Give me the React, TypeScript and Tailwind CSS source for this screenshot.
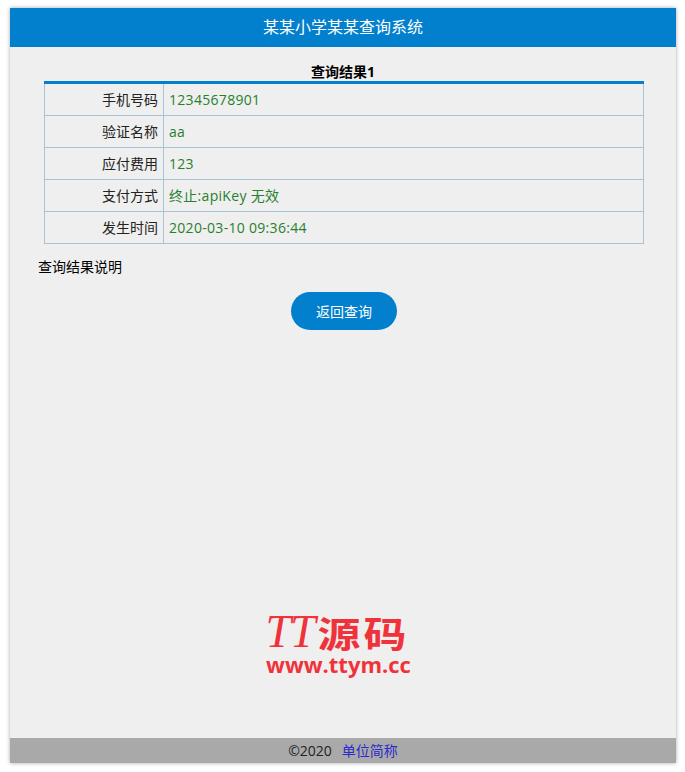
const rows: [string, string][] = [
  ["手机号码", "12345678901"],
  ["验证名称", "aa"],
  ["应付费用", "123"],
  ["支付方式", "终止:apiKey 无效"],
  ["发生时间", "2020-03-10 09:36:44"],
];

const font = "font-['Open_Sans','Noto_Sans_CJK_SC',sans-serif]";

export default function App() {
  return (
    <div className={`h-[772px] w-[685px] overflow-hidden bg-white pl-[10px] pr-[9px] pt-[8px] pb-[9px] ${font}`}>
      <div className="flex h-[755px] flex-col bg-[#efefef] shadow-[0_0_4px_rgba(0,0,0,0.35)]">
        <header className="flex h-[39px] shrink-0 items-center justify-center bg-[#0280cd] pb-[1px] text-base text-white">
          某某小学某某查询系统
        </header>
        <main className="flex flex-1 flex-col">
          <div className="mt-[15px] text-center text-[14px] leading-[19px] font-bold text-black">查询结果1</div>
          <table className="mx-[34px] w-[600px] border-collapse border-t-[3px] border-t-[#0280cd] text-[14px]">
            <tbody>
              {rows.map(([label, value], i) => (
                <tr key={label} className={i === 0 ? "h-[33px]" : "h-[32px]"}>
                  <td className="w-[119px] border border-[#a6c4d6] pr-[5px] text-right leading-none text-[#222222]">{label}</td>
                  <td className="border border-[#a6c4d6] pl-[5px] leading-none tracking-[0.3px] text-[#27802e]">{value}</td>
                </tr>
              ))}
            </tbody>
          </table>
          <p className="mt-[14px] pl-[28px] text-[14px] leading-[18px] text-black">查询结果说明</p>
          <div className="mt-[16px] flex justify-center pl-[2px]">
            <button className="h-[38px] w-[106px] rounded-[19px] bg-[#0280cd] text-[14px] text-white">返回查询</button>
          </div>
          <div className="mt-[281px] flex flex-col items-center pr-[11px] text-[#f0333a]">
            <div className="flex h-[42px] items-center">
              <span className="font-['Liberation_Serif',serif] text-[46px] leading-[42px] italic tracking-[-1px]">TT</span>
              <span className="ml-[3px] inline-block scale-y-[85%] font-['Noto_Sans_CJK_SC',sans-serif] text-[43px] leading-[42px] font-bold tracking-[3px]">源码</span>
            </div>
            <div className="pl-[2px] font-['Open_Sans',sans-serif] text-[22px] leading-[22px] font-bold">www.ttym.cc</div>
          </div>
        </main>
        <footer className="flex h-[25px] shrink-0 items-center justify-center bg-[#a9a9a9] text-[14px] text-[#222222]">
          <span>©2020</span>
          <a className="ml-[10px] text-[#2a2acc]" href="#">单位简称</a>
        </footer>
      </div>
    </div>
  );
}
